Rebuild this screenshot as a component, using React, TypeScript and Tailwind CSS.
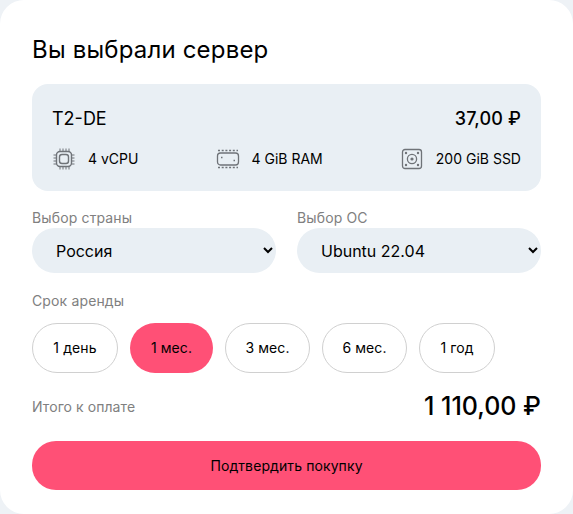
const terms = [
  { label: '1 день', width: 'w-[86px]', active: false },
  { label: '1 мес.', width: 'w-[83px]', active: true },
  { label: '3 мес.', width: 'w-[85px]', active: false },
  { label: '6 мес.', width: 'w-[85px]', active: false },
  { label: '1 год', width: 'w-[76px]', active: false },
]

function CpuIcon() {
  return (
    <svg width="24" height="24" viewBox="0 0 24 24" fill="none" stroke="#6f7378">
      <rect x="4.5" y="4.5" width="15" height="15" rx="3.5" strokeWidth="1.4" />
      <rect x="7.5" y="7.5" width="9" height="9" rx="2.5" strokeWidth="1.4" />
      <path d="M8 1.5v3M11 1.5v3M14 1.5v3M17 1.5v3M8 19.5v3M11 19.5v3M14 19.5v3M17 19.5v3M1.5 8h3M1.5 11h3M1.5 14h3M1.5 17h3M19.5 8h3M19.5 11h3M19.5 14h3M19.5 17h3" strokeWidth="1" />
    </svg>
  )
}

function RamIcon() {
  return (
    <svg width="24" height="24" viewBox="0 0 24 24" fill="none" stroke="#6f7378">
      <rect x="1.5" y="6" width="21" height="12" rx="3" strokeWidth="1.3" />
      <path d="M2 3.5h20M2 20.5h20" strokeWidth="1.5" strokeDasharray="2 1.7" />
      <path d="M5 10.5h1.5M17.5 13.5h1.5" strokeWidth="1.5" />
    </svg>
  )
}

function SsdIcon() {
  return (
    <svg width="24" height="24" viewBox="0 0 24 24" fill="none" stroke="#6f7378">
      <rect x="2.5" y="2.5" width="19" height="19" rx="2.5" strokeWidth="1.3" />
      <circle cx="12" cy="12" r="4.6" strokeWidth="1.3" />
      <circle cx="12" cy="12" r="1.6" fill="#6f7378" stroke="none" />
      <circle cx="6" cy="6" r="1.2" fill="#6f7378" stroke="none" />
      <circle cx="18" cy="6" r="1.2" fill="#6f7378" stroke="none" />
      <circle cx="6" cy="18" r="1.2" fill="#6f7378" stroke="none" />
      <circle cx="18" cy="18" r="1.2" fill="#6f7378" stroke="none" />
    </svg>
  )
}

export default function App() {
  return (
    <div className="w-[573px] h-[514px] bg-[#eef2f6] overflow-hidden font-['Inter',sans-serif] text-black">
      <div className="h-full bg-white rounded-[24px] px-8 pt-[34px]">
        <h1 className="text-[24px] leading-[32px] font-normal tracking-[0.18px]">Вы выбрали сервер</h1>

        {/* Server */}
        <div className="mt-[18px] h-[107px] bg-[#e9eff4] rounded-2xl px-5 pt-[22px]">
          <div className="flex justify-between items-center h-6">
            <span className="text-[18px]">T2-DE</span>
            <span className="text-[18px] font-medium tracking-[0.15px]">37,00 ₽</span>
          </div>
          <div className="flex justify-between items-center mt-[17px] text-sm">
            <div className="flex items-center gap-[12px]"><CpuIcon /><span>4 vCPU</span></div>
            <div className="flex items-center gap-[12px]"><RamIcon /><span>4 GiB RAM</span></div>
            <div className="flex items-center gap-[12px]"><SsdIcon /><span>200 GiB SSD</span></div>
          </div>
        </div>

        {/* Selects */}
        <div className="grid grid-cols-2 gap-[21px] mt-[17px]">
          <div>
            <div className="text-sm leading-[19px] tracking-[0.14px] text-[#808080]">Выбор страны</div>
            <select className="block w-full h-[45px] mt-px bg-[#e9eff4] rounded-[24px] pl-5 pr-2 text-base">
              <option>Россия</option>
            </select>
          </div>
          <div>
            <div className="text-sm leading-[19px] tracking-[0.14px] text-[#808080]">Выбор ОС</div>
            <select className="block w-full h-[45px] mt-px bg-[#e9eff4] rounded-[24px] pl-5 pr-2 text-base">
              <option>Ubuntu 22.04</option>
            </select>
          </div>
        </div>

        {/* Term */}
        <div className="text-sm leading-[19px] tracking-[0.14px] text-[#808080] mt-[18px]">Срок аренды</div>
        <div className="flex gap-3 mt-[13px]">
          {terms.map((t) => (
            <button
              key={t.label}
              className={`h-[50px] rounded-[25px] text-sm tracking-[0.1px] ${t.width} ${t.active ? 'bg-[#ff5076]' : 'bg-white border border-[#d0d0d0]'}`}
            >
              {t.label}
            </button>
          ))}
        </div>

        {/* Total */}
        <div className="flex justify-between items-center mt-[18px] h-8">
          <span className="text-sm tracking-[0.07px] text-[#808080]">Итого к оплате</span>
          <span className="text-[25px] font-medium">1 110,00 ₽</span>
        </div>

        <button className="block w-full h-[49px] mt-[18px] bg-[#ff5076] rounded-[24px] text-sm tracking-[0.1px]">Подтвердить покупку</button>
      </div>
    </div>
  )
}
